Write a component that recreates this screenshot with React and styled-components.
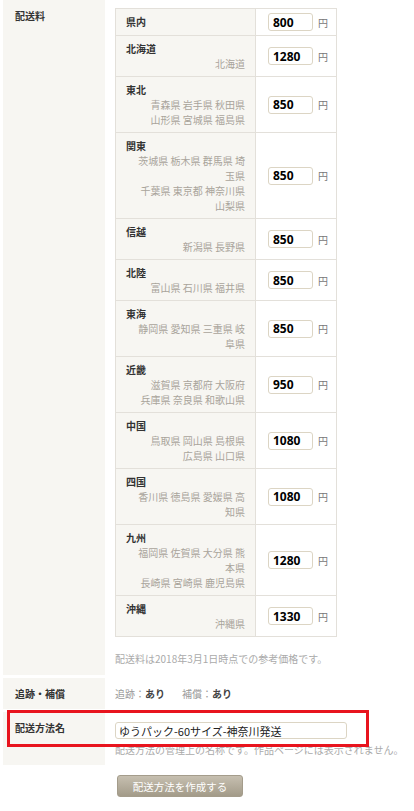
import React from 'react';
import styled, { createGlobalStyle } from 'styled-components';

const GlobalStyle = createGlobalStyle`
  body {
    margin: 0;
    background: #fff;
    font-family: "Noto Sans CJK JP", "Noto Sans", sans-serif;
    font-size: 10px;
    color: #333;
  }
`;

const areas = [
  { name: '県内', price: '800', groups: [] },
  { name: '北海道', price: '1280', groups: ['北海道'] },
  { name: '東北', price: '850', groups: ['青森県 岩手県 秋田県', '山形県 宮城県 福島県'] },
  { name: '関東', price: '850', groups: ['茨城県 栃木県 群馬県 埼玉県', '千葉県 東京都 神奈川県 山梨県'] },
  { name: '信越', price: '850', groups: ['新潟県 長野県'] },
  { name: '北陸', price: '850', groups: ['富山県 石川県 福井県'] },
  { name: '東海', price: '850', groups: ['静岡県 愛知県 三重県 岐阜県'] },
  { name: '近畿', price: '950', groups: ['滋賀県 京都府 大阪府', '兵庫県 奈良県 和歌山県'] },
  { name: '中国', price: '1080', groups: ['鳥取県 岡山県 島根県', '広島県 山口県'] },
  { name: '四国', price: '1080', groups: ['香川県 徳島県 愛媛県 高知県'] },
  { name: '九州', price: '1280', groups: ['福岡県 佐賀県 大分県 熊本県', '長崎県 宮崎県 鹿児島県'] },
  { name: '沖縄', price: '1330', groups: ['沖縄県'] },
];

const App = () => {
  return (
    <Page>
      <GlobalStyle />
      <FormRow>
        <RowLabel>配送料</RowLabel>
        <RowBody $top={8} $bottom={9}>
          <PriceTable>
            <tbody>
              {areas.map((a) => (
                <tr key={a.name}>
                  <AreaCell>
                    <AreaName>{a.name}</AreaName>
                    {a.groups.map((g) => (
                      <PrefList key={g}>{g}</PrefList>
                    ))}
                  </AreaCell>
                  <PriceCell>
                    <PriceInput defaultValue={a.price} />
                    <Yen>円</Yen>
                  </PriceCell>
                </tr>
              ))}
            </tbody>
          </PriceTable>
          <Note $top={14}>配送料は2018年3月1日時点での参考価格です。</Note>
        </RowBody>
      </FormRow>

      <FormRow>
        <RowLabel>追跡・補償</RowLabel>
        <RowBody $top={8} $bottom={8}>
          <Option>追跡：<b>あり</b></Option>
          <Option>補償：<b>あり</b></Option>
        </RowBody>
      </FormRow>

      <FormRow>
        <RowLabel>配送方法名</RowLabel>
        <RowBody $top={10} $bottom={8}>
          <NameInput defaultValue="ゆうパック-60サイズ-神奈川発送" />
          <Note $top={3}>配送方法の管理上の名称です。作品ページには表示されません。</Note>
        </RowBody>
        <Highlight />
      </FormRow>

      <Actions>
        <SubmitButton>配送方法を作成する</SubmitButton>
      </Actions>
    </Page>
  );
};

const Page = styled.div`
  padding-left: 3px;
  width: 411px;
  box-sizing: border-box;
`;

const FormRow = styled.div`
  position: relative;
  display: grid;
  grid-template-columns: 102px 1fr;
  margin-bottom: 3px;
`;

const RowLabel = styled.div`
  background: #f7f6f2;
  padding: 8px 12px;
  font-weight: bold;
  line-height: 15px;
  color: #333;
`;

const RowBody = styled.div`
  padding: ${(p) => p.$top}px 10px ${(p) => p.$bottom}px;
  line-height: 15px;
`;

const PriceTable = styled.table`
  border-collapse: collapse;
  width: 222px;
  table-layout: fixed;
`;

const AreaCell = styled.td`
  width: 119px;
  background: #f7f6f2;
  border: 1px solid #e3e0da;
  padding: 5px 10px;
  line-height: 15px;
  vertical-align: top;
`;

const AreaName = styled.div`
  font-weight: bold;
  color: #333;
`;

const PrefList = styled.div`
  margin-left: 10px;
  text-align: right;
  color: #a9a49b;
`;

const PriceCell = styled.td`
  background: #fff;
  border: 1px solid #e3e0da;
  padding: 4px 0 4px 12px;
  vertical-align: middle;
  white-space: nowrap;
`;

const PriceInput = styled.input`
  box-sizing: border-box;
  width: 45px;
  height: 18px;
  border: 1px solid #dcd5c4;
  border-radius: 3px;
  padding: 0 4px;
  font-family: "Noto Sans", sans-serif;
  font-weight: bold;
  font-size: 12px;
  color: #000;
  vertical-align: middle;
  outline: none;
`;

const Yen = styled.span`
  margin-left: 5px;
  color: #777;
  vertical-align: middle;
`;

const Note = styled.div`
  margin-top: ${(p) => p.$top}px;
  color: #aaa;
  white-space: nowrap;
`;

const Option = styled.span`
  color: #999;
  margin-right: 17px;
  b {
    color: #444;
  }
`;

const NameInput = styled.input`
  display: block;
  box-sizing: border-box;
  width: 232px;
  height: 17px;
  border: 1px solid #dcd5c4;
  border-radius: 3px;
  padding: 0 3px;
  font-family: "Noto Sans CJK JP", sans-serif;
  font-size: 11px;
  color: #222;
  outline: none;
`;

const Highlight = styled.div`
  position: absolute;
  left: 4px;
  top: -2px;
  width: 362px;
  height: 37px;
  box-sizing: border-box;
  border: 3px solid #e8141e;
  pointer-events: none;
`;

const Actions = styled.div`
  padding: 7px 0 0 114px;
`;

const SubmitButton = styled.button`
  width: 126px;
  height: 22px;
  border: 1px solid #a49c8b;
  border-radius: 3px;
  background: linear-gradient(#c6bfb0, #a39b89);
  color: #fff;
  font-family: "Noto Sans CJK JP", sans-serif;
  font-size: 10.5px;
  padding: 0;
  cursor: pointer;
`;

export default App;
